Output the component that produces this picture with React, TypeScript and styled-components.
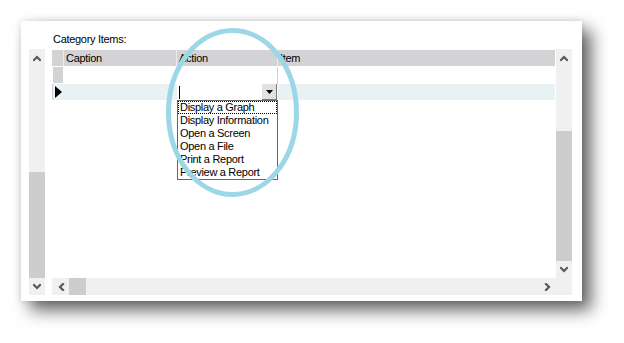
import React from "react";
import styled, { createGlobalStyle } from "styled-components";

const Global = createGlobalStyle`
  html, body { margin: 0; padding: 0; background: #ffffff; }
  body { font-family: "Liberation Sans", Arial, sans-serif; font-size: 11px; letter-spacing: -0.3px; color: #000; }
`;

const Page = styled.div`
  padding: 21px 0 0 21px;
  min-height: 343px;
  box-sizing: border-box;
  display: flex;
  align-items: flex-start;
`;

const Panel = styled.div`
  position: relative;
  width: 561px;
  height: 280px;
  background: #ffffff;
  display: flex;
  flex-direction: column;
  box-shadow: 9px 9px 16px rgba(0, 0, 0, 0.62), 0 0 6px rgba(0, 0, 0, 0.12);
`;

const Label = styled.div`
  height: 28px;
  box-sizing: border-box;
  padding: 12px 0 0 32px;
  line-height: 13px;
`;

const Body = styled.div`
  display: flex;
  gap: 7px;
  margin-left: 8px;
  height: 246px;
`;

const VScroll = styled.div`
  width: 16px;
  flex: none;
  display: flex;
  flex-direction: column;
  background: #f0f0f0;
`;

const HScroll = styled.div`
  height: 17px;
  display: flex;
  flex-direction: row;
  background: #f0f0f0;
`;

const ScrollButton = styled.div<{ $horizontal?: boolean }>`
  flex: none;
  width: ${p => (p.$horizontal ? 17 : 16)}px;
  height: 17px;
  display: flex;
  align-items: center;
  justify-content: center;
`;

const Track = styled.div<{ $horizontal?: boolean }>`
  flex: 1;
  display: flex;
  flex-direction: ${p => (p.$horizontal ? "row" : "column")};
`;

const Thumb = styled.div<{ $offset: number; $size: number; $horizontal?: boolean }>`
  flex: none;
  background: #cdcdcd;
  ${p =>
    p.$horizontal
      ? `margin-left: ${p.$offset}px; width: ${p.$size}px; height: 100%;`
      : `margin-top: ${p.$offset}px; height: ${p.$size}px; width: 100%;`}
`;

const Corner = styled.div`
  background: #f0f0f0;
`;

const GridFrame = styled.div`
  width: 520px;
  display: grid;
  grid-template-columns: 504px 16px;
  grid-template-rows: 1fr 17px;
`;

const TableArea = styled.div`
  background: #ffffff;
  padding: 1px 1px 0 0;
  display: flex;
  flex-direction: column;
`;

const cols = `
  display: grid;
  grid-template-columns: 12px 113px 101px 1fr;
`;

const HeaderRow = styled.div`
  ${cols}
  height: 16px;
  background: #d3d3d5;
`;

const HeaderCell = styled.div<{ $last?: boolean }>`
  line-height: 16px;
  padding-left: 2px;
  border-right: ${p => (p.$last ? "none" : "1px solid #ececee")};
  white-space: nowrap;
  overflow: hidden;
`;

const Row = styled.div<{ $current?: boolean }>`
  ${cols}
  height: ${p => (p.$current ? 16 : 17)}px;
  margin-top: ${p => (p.$current ? 0 : 1)}px;
  background: ${p => (p.$current ? "#e8f2f4" : "#ffffff")};
`;

const SelectorCell = styled.div<{ $gray?: boolean }>`
  background: ${p => (p.$gray ? "#d3d3d5" : "transparent")};
  margin: ${p => (p.$gray ? "0 1px 1px 1px" : "0")};
  border-left: ${p => (p.$gray ? "none" : "1px solid #c9d0d2")};
  display: flex;
  align-items: center;
  padding-left: 2px;
`;

const Cell = styled.div<{ $divider?: boolean }>`
  border-right: ${p => (p.$divider ? "1px solid #d0d0d0" : "none")};
`;

const Combo = styled.div`
  position: relative;
  display: flex;
  background: #ffffff;
`;

const ComboInput = styled.div`
  flex: 1;
  display: flex;
  align-items: center;
  padding-left: 2px;
`;

const Caret = styled.div`
  width: 1px;
  height: 13px;
  background: #000;
`;

const ComboButton = styled.div`
  width: 15px;
  margin-right: 1px;
  box-sizing: border-box;
  background: #e1e1e1;
  border-right: 1px solid #7a7a7a;
  border-bottom: 1px solid #7a7a7a;
  display: flex;
  align-items: center;
  justify-content: center;
`;

const DropList = styled.div`
  position: absolute;
  top: 100%;
  left: 0;
  width: 101px;
  box-sizing: border-box;
  border: 1px solid #666666;
  background: #ffffff;
  z-index: 2;
`;

const ListItem = styled.div<{ $focused?: boolean }>`
  height: 13px;
  line-height: 13px;
  padding-left: 2px;
  white-space: nowrap;
  ${p => p.$focused && `outline: 1px dotted #000; outline-offset: -1px;`}
`;

const Overlay = styled.svg`
  position: absolute;
  left: 0;
  top: 0;
  width: 100%;
  height: 100%;
  pointer-events: none;
  overflow: visible;
  z-index: 5;
`;

type Dir = "up" | "down" | "left" | "right";
const Chevron: React.FC<{ dir: Dir }> = ({ dir }) => {
  const rot = { up: 0, right: 90, down: 180, left: 270 }[dir];
  return (
    <svg width="8" height="8" viewBox="0 0 8 8" style={{ transform: `rotate(${rot}deg)` }}>
      <polyline points="1,6 4,3 7,6" fill="none" stroke="#575757" strokeWidth="2.2" strokeLinecap="square" strokeLinejoin="miter" />
    </svg>
  );
};

const DownTriangle = () => (
  <svg width="7" height="4" viewBox="0 0 7 4">
    <polygon points="0,0 7,0 3.5,4" fill="#000" />
  </svg>
);

const RowPointer = () => (
  <svg width="7" height="12" viewBox="0 0 7 12">
    <polygon points="0,0 7,6 0,12" fill="#000" />
  </svg>
);

const actions = [
  "Display a Graph",
  "Display Information",
  "Open a Screen",
  "Open a File",
  "Print a Report",
  "Preview a Report",
];

export default function App() {
  return (
    <>
      <Global />
      <Page>
        <Panel>
          <Label>Category Items:</Label>
          <Body>
            <VScroll>
              <ScrollButton><Chevron dir="up" /></ScrollButton>
              <Track>
                <Thumb $offset={106} $size={106} />
              </Track>
              <ScrollButton><Chevron dir="down" /></ScrollButton>
            </VScroll>
            <GridFrame>
              <TableArea>
                <HeaderRow>
                  <HeaderCell />
                  <HeaderCell>Caption</HeaderCell>
                  <HeaderCell>Action</HeaderCell>
                  <HeaderCell $last>Item</HeaderCell>
                </HeaderRow>
                <Row>
                  <SelectorCell $gray />
                  <Cell />
                  <Cell $divider />
                  <Cell />
                </Row>
                <Row $current>
                  <SelectorCell><RowPointer /></SelectorCell>
                  <Cell />
                  <Combo>
                    <ComboInput><Caret /></ComboInput>
                    <ComboButton><DownTriangle /></ComboButton>
                    <DropList>
                      {actions.map((a, i) => (
                        <ListItem key={a} $focused={i === 0}>{a}</ListItem>
                      ))}
                    </DropList>
                  </Combo>
                  <Cell />
                </Row>
              </TableArea>
              <VScroll>
                <ScrollButton><Chevron dir="up" /></ScrollButton>
                <Track>
                  <Thumb $offset={65} $size={130} />
                </Track>
                <ScrollButton><Chevron dir="down" /></ScrollButton>
              </VScroll>
              <HScroll>
                <ScrollButton $horizontal><Chevron dir="left" /></ScrollButton>
                <Track $horizontal>
                  <Thumb $horizontal $offset={0} $size={17} />
                </Track>
                <ScrollButton $horizontal><Chevron dir="right" /></ScrollButton>
              </HScroll>
              <Corner />
            </GridFrame>
          </Body>
          <Overlay viewBox="0 0 561 280">
            <ellipse cx="211.5" cy="91.5" rx="64" ry="82" fill="none" stroke="#9cd7e7" strokeWidth="5" />
          </Overlay>
        </Panel>
      </Page>
    </>
  );
}
